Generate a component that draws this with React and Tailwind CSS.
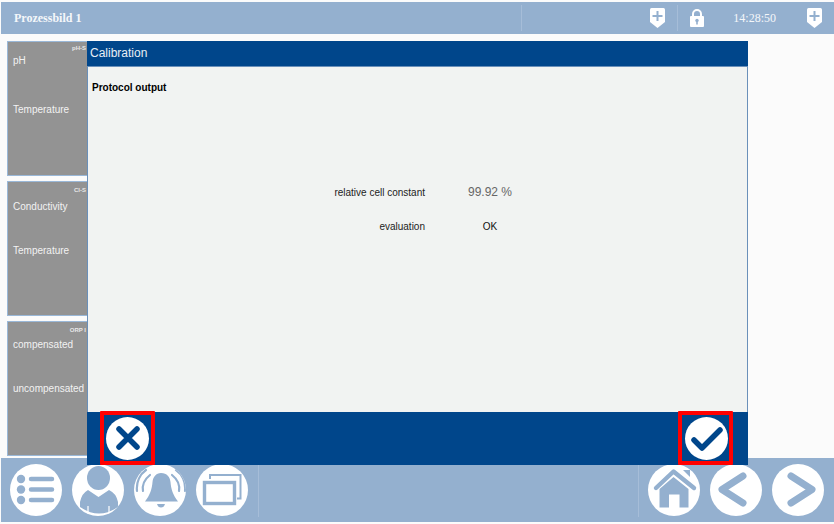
const BLUE = "#94b0cf"

function ShieldIcon() {
    return (
        <svg width="15" height="20" viewBox="0 0 15 20">
            <path d="M0 1.5 Q0 0 1.5 0 H13.5 Q15 0 15 1.5 V14 L7.5 20 L0 14 Z" fill="#fff" />
            <path d="M7.5 3V13M2.5 8H12.5" stroke={BLUE} strokeWidth="2" />
        </svg>
    )
}

function LockIcon() {
    return (
        <svg width="14" height="18" viewBox="0 0 14 18">
            <path d="M3 8V5a4 4 0 018 0V8" fill="none" stroke="#fff" strokeWidth="2" />
            <rect x="0" y="7" width="14" height="11" rx="1" fill="#fff" />
            <circle cx="7" cy="11.5" r="1.7" fill={BLUE} />
            <rect x="6.2" y="11.5" width="1.6" height="4" fill={BLUE} />
        </svg>
    )
}

// every footer icon is drawn on the 52px circle itself
function RoundButton({ children }) {
    return (
        <div className="w-[52px] h-[52px] rounded-full bg-white shrink-0 overflow-hidden">
            <svg width="52" height="52" viewBox="0 0 52 52">{children}</svg>
        </div>
    )
}

function MenuIcon() {
    return (
        <RoundButton>
            <circle cx="11" cy="15" r="4.2" fill={BLUE} />
            <circle cx="11" cy="25.5" r="4.2" fill={BLUE} />
            <circle cx="11" cy="36" r="4.2" fill={BLUE} />
            <path d="M21 15H42M21 25.5H42M21 36H42" stroke={BLUE} strokeWidth="4.5" strokeLinecap="round" />
        </RoundButton>
    )
}

function UserIcon() {
    return (
        <RoundButton>
            <ellipse cx="26.5" cy="14" rx="11.5" ry="12" fill={BLUE} />
            <path d="M16 26 L26.5 33 L37 26 Q44 29 46 38 L46 43 Q27 56 8 43 L8 38 Q10 29 16 26Z" fill={BLUE} />
            <path d="M16 42V50M37 42V50" stroke="#fff" strokeWidth="1.2" />
        </RoundButton>
    )
}

function BellIcon() {
    return (
        <RoundButton>
            <path d="M27 9 C33 9 36 13 36.5 18 C37 25 39 31 44 37.5 H11 C16 31 18 25 18.5 18 C19 13 22 9 27 9Z" fill={BLUE} />
            <path d="M23 40 H31 Q30 43.5 27 43.5 Q24 43.5 23 40Z" fill={BLUE} />
            <path d="M9 27 C8 21 11 15 16 11 M45 27 C46 21 43 15 38 11" fill="none" stroke={BLUE} strokeWidth="2.2" strokeLinecap="round" />
            <path d="M3 27 C2 18 6 10 12 6 M51 27 C52 18 48 10 42 6" fill="none" stroke={BLUE} strokeWidth="2.2" strokeLinecap="round" />
        </RoundButton>
    )
}

function WindowsIcon() {
    return (
        <RoundButton>
            <path d="M14 15V11H44.5V34.5H41" fill="none" stroke={BLUE} strokeWidth="2" />
            <rect x="8.5" y="18.5" width="30" height="21" fill="none" stroke={BLUE} strokeWidth="3.4" />
        </RoundButton>
    )
}

function HomeIcon() {
    return (
        <RoundButton>
            <path d="M8 24 L25.5 7.5 L46 24" fill="none" stroke={BLUE} strokeWidth="4.4" strokeLinecap="round" strokeLinejoin="round" />
            <path d="M35 6H42V13Z" fill={BLUE} />
            <path d="M11.5 25 L25.5 13 L40.5 25 V43.5 H31.5 V30.5 H21 V43.5 H11.5Z" fill={BLUE} />
        </RoundButton>
    )
}

function BackIcon() {
    return (
        <RoundButton>
            <path d="M33 12 L12 25.5 L33 39" fill="none" stroke={BLUE} strokeWidth="7" strokeLinecap="round" strokeLinejoin="round" />
        </RoundButton>
    )
}

function ForwardIcon() {
    return (
        <RoundButton>
            <path d="M19 12 L40 25.5 L19 39" fill="none" stroke={BLUE} strokeWidth="7" strokeLinecap="round" strokeLinejoin="round" />
        </RoundButton>
    )
}

function SensorCard({ tag, first, second, topClass, firstClass, secondClass }) {
    return (
        <div className={`w-[90px] h-[135px] bg-[#939393] border border-[#9ab8d8] text-[#f2f2f2] text-[10px] leading-[12px] overflow-hidden ${topClass}`}>
            <p className="text-[6px] leading-[8px] font-bold text-right pr-[10px] text-[#e8e8e8] whitespace-nowrap">{tag}</p>
            <p className={`pl-[5px] whitespace-nowrap ${firstClass}`}>{first}</p>
            <p className={`pl-[5px] whitespace-nowrap ${secondClass}`}>{second}</p>
        </div>
    )
}

function ActionBox({ children, className = "" }) {
    return (
        <div className={`w-[55px] h-[54px] shrink-0 border-[4px] border-[#f00] rounded-[1px] flex items-center justify-center ${className}`}>
            <div className="w-[43px] h-[43px] shrink-0 rounded-full bg-white flex items-center justify-center">
                {children}
            </div>
        </div>
    )
}

export default function App() {
    return (
        <div className="relative w-[834px] h-[524px] flex flex-col overflow-hidden bg-[#fbfbfb] font-['Liberation_Sans',sans-serif]">
            <header className="mt-[2px] ml-[1px] h-[32px] flex items-center bg-[#94b0cf] text-white font-['Liberation_Serif',serif]">
                <span className="ml-[13px] text-[12px] font-bold text-[#f4f7fa]">Prozessbild 1</span>
                <div className="ml-auto h-full flex items-center">
                    <div className="w-[144px] h-[26px] border-l border-[#a6bdd8] flex justify-end items-center">
                        <ShieldIcon />
                    </div>
                    <div className="w-[1px] h-[26px] ml-[12px] bg-[#a6bdd8]" />
                    <div className="ml-[12px] flex"><LockIcon /></div>
                    <span className="ml-[29px] text-[12px] text-[#f4f7fa]">14:28:50</span>
                    <div className="ml-[31px] mr-[12px] flex"><ShieldIcon /></div>
                </div>
            </header>

            <main className="flex-1 pl-[7px] pt-[7px] flex flex-col gap-[5px]">
                <SensorCard tag="pH-S" first="pH" second="Temperature" topClass="pt-[2px]" firstClass="mt-[3px]" secondClass="mt-[37px]" />
                <SensorCard tag="Cl-S" first="Conductivity" second="Temperature" topClass="pt-[4px]" firstClass="mt-[7px]" secondClass="mt-[32px]" />
                <SensorCard tag="ORP I" first="compensated" second="uncompensated" topClass="pt-[4px]" firstClass="mt-[5px]" secondClass="mt-[32px]" />
            </main>

            <footer className="h-[64px] ml-[1px] mb-[2px] bg-[#94b0cf] flex items-center pl-[9px] pr-[10px]">
                <div className="flex items-center gap-[10px]">
                    <MenuIcon />
                    <UserIcon />
                    <BellIcon />
                    <WindowsIcon />
                </div>
                <div className="w-[1px] h-[54px] ml-[10px] bg-[#a6bdd8]" />
                <div className="ml-auto flex items-center">
                    <div className="w-[1px] h-[54px] mr-[9px] bg-[#a6bdd8]" />
                    <div className="flex items-center gap-[10px]">
                        <HomeIcon />
                        <BackIcon />
                        <ForwardIcon />
                    </div>
                </div>
            </footer>

            <section className="absolute left-[87px] top-[41px] w-[661px] h-[424px] flex flex-col bg-[#00468b]">
                <h1 className="h-[25px] shrink-0 pl-[3px] pb-[2px] flex items-center text-[12px] text-[#e8eef5]">Calibration</h1>
                <div className="h-[346px] shrink-0 border-x border-t border-[#6a90ba] bg-[#f1f3f2]">
                    <p className="pl-[4px] pt-[13px] text-[10px] font-bold text-black">Protocol output</p>
                    <div className="mt-[88px] grid grid-cols-[337px_130px] gap-y-[18px] text-[10px] text-[#222] items-center">
                        <span className="text-right">relative cell constant</span>
                        <span className="text-center text-[12px] text-[#666]">99.92 %</span>
                        <span className="text-right">evaluation</span>
                        <span className="text-center text-[#111]">OK</span>
                    </div>
                </div>
                <div className="h-[53px] shrink-0 flex items-end justify-between pl-[13px] pr-[15px]">
                    <ActionBox>
                        <svg width="26" height="26" viewBox="0 0 26 26">
                            <path d="M4 4L22 22M22 4L4 22" stroke="#00468b" strokeWidth="5.5" strokeLinecap="round" />
                        </svg>
                    </ActionBox>
                    <ActionBox className="pl-[2px]">
                        <svg width="34" height="26" viewBox="0 0 34 26">
                            <path d="M4 15L12 23L30 5" fill="none" stroke="#00468b" strokeWidth="5.5" strokeLinecap="round" strokeLinejoin="round" />
                        </svg>
                    </ActionBox>
                </div>
            </section>
        </div>
    )
}
